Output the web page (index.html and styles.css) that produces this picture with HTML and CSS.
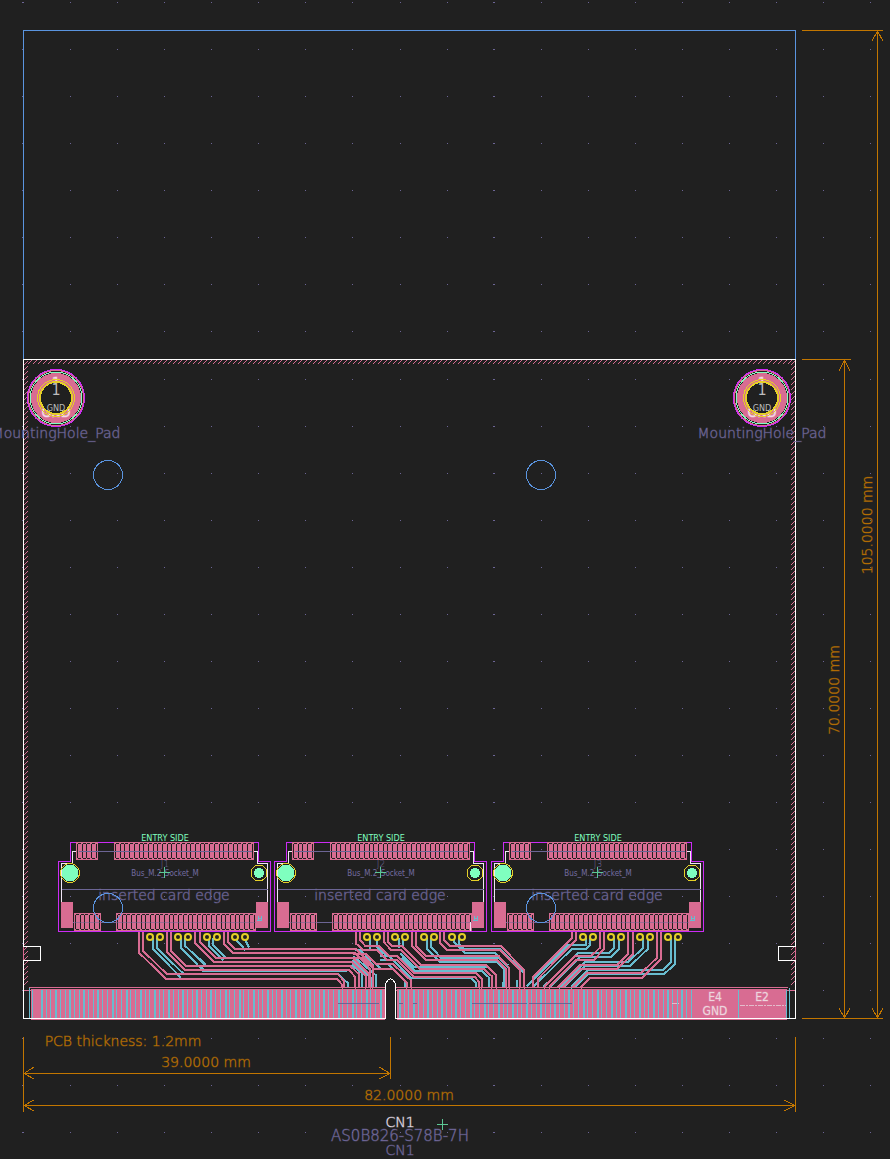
FILE: index.html
```html
<!DOCTYPE html>
<html lang="en">
<head>
<meta charset="utf-8">
<title>PCB layout</title>
<link rel="stylesheet" href="styles.css">
</head>
<body>
<main class="editor">
<svg class="board" viewBox="0 0 890 1159" aria-label="PCB layout">
  <defs>
    <g id="hole">
      <circle class="pad-line" r="27.500"/>
      <circle class="courtyard" r="28.500"/>
      <circle class="pad" r="25"/>
      <circle class="mint-line" r="26"/>
      <text class="label-large" y="-11">1</text>
      <text class="label-large" y="19">GND</text>
      <circle class="yellow-line" r="18.500"/>
      <circle class="drill" r="16"/>
      <text class="label-pin grey" y="-3">1</text>
      <text class="label-net grey" y="13">GND</text>
    </g>
    <g id="socket">
      <path class="courtyard" d="M70.500 842.500H258.500V861.500H270.500V931.500H58.500V861.500H70.500Z"/>
      <path class="silk" d="M61.500 902V863.500H72.500V851.500H79M252 851.500H257.500V863.500H267.500V902"/>
      <path class="fab" d="M61.500 889.500H267.500M61.500 902V922.500H267.500V902"/>
      <path class="pad" d="M61 902H73V928H61ZM256 902H268V928H256Z"/>
      <circle class="mint" cx="70" cy="873" r="8.500"/>
      <circle class="yellow-line" cx="70" cy="873" r="9.500"/>
      <circle class="mint" cx="259" cy="873" r="5"/>
      <circle class="yellow-line" cx="259" cy="873" r="8"/>
      <g class="socket-pads"></g>
      <path class="fab" d="M79 851.500H252"/>
      <path class="fab faint" d="M74 922.500H256"/>
      <path class="cyan" d="M257 920H262M258 916V920M261 916V920M258 918H261"/>
      <text class="text fab-text" x="164" y="900">inserted card edge</text>
      <text class="tiny fab-text" x="165" y="876">Bus_M.2_Socket_M</text>
      <path class="mint-line soft" d="M164.500 867V878M159 872.500H170"/>
      <text class="tiny entry" x="165" y="841">ENTRY SIDE</text>
    </g>
    <g id="vias">
      <circle cx="150" cy="937" r="3"/><circle cx="160" cy="937" r="3"/>
      <circle cx="178" cy="937" r="3"/><circle cx="188" cy="937" r="3"/>
      <circle cx="207" cy="937" r="3"/><circle cx="217" cy="937" r="3"/>
      <circle cx="235" cy="937" r="3"/><circle cx="245" cy="937" r="3"/>
    </g>
  </defs>

  <path id="grid" class="grid"/>
  <path id="hatch" class="hatch"/>

  <g class="traces back">
    <g transform="translate(10 925) scale(.3333)">
      <path d="M429 40V72L513 158M441 40V69L520 146M513 40V68L580 138H1010M525 40V62L588 122"/>
    </g>
    <g transform="translate(200 925) scale(.3333)">
      <path d="M28 40V65L70 106M40 40V60L76 96M0 100L16 118M0 122L14 138M105 40L137 76M133 40L147 68M415 147L443 174V190M455 120L487 146V190M457 105L515 160V190M460 93L527 150V190M465 75H480L545 132H580M468 88H485L520 120M510 40V72M530 40V65L560 93H595"/>
    </g>
    <g transform="translate(380 925) scale(.3333)">
      <path d="M57 40V70M68 40V62M0 92H25L78 145L92 160H275L287 174V190M0 105H38L98 163M60 85L100 125H320M65 98L105 138H305L328 158V190M0 118H25L75 168V190M140 40V70L180 110H350L373 132V190M152 40V65L183 98H355L387 130V190M223 40V52L255 84H345L385 122M238 40V58L252 72H360L433 145V190M370 170V190M411 165V190M458 170V190"/>
    </g>
    <g transform="translate(560 925) scale(.3333)">
      <path d="M78 40V60H25L-100 185M90 40V60L78 72H35L-80 186M162 40V68L147 84H55L-48 184V192M177 40V72L152 97H60L-30 186M250 40V68L205 110H75L0 185V192M263 40V72L212 122H75L12 186M333 40V112L310 134H85L35 184V192M345 40V117L313 147H85L45 188"/>
    </g>
  </g>
  <g class="traces front">
    <g transform="translate(10 925) scale(.3333)">
      <path d="M387 15V83L467 161H980L997 180V192M399 15V77L470 147H983L1003 168V192M471 15V80L525 135H1017L1035 155V192M483 15V77L528 122H1020L1047 148V192M555 15V55L612 111H1025L1068 154V192M570 15V50L617 99H1030L1077 148V192"/>
    </g>
    <g transform="translate(200 925) scale(.3333)">
      <path d="M73 15V58L98 84H465L500 118L510 132V192M84 15V50L104 72H468L520 124V192"/>
    </g>
    <g transform="translate(380 925) scale(.3333)">
      <path d="M193 15V45L210 62H362L432 135V192M181 15V55L200 74H360L420 135V192M108 15V62L138 92H355L387 128V192M97 15V65L136 104H350L378 132V192M24 15V50L36 62H65L122 119H318L347 150V192M12 15V52L33 74H63L122 133H312L337 155V192M-60 15V45L-45 62H-5L27 92H50L103 145H290L305 160V192M-73 15V55L-50 75H-10L20 104H50L103 157H285L297 170V192M-80 88H-40L-10 118H40L93 166V192M-80 100H-50L-20 131H38L82 174V192"/>
    </g>
    <g transform="translate(560 925) scale(.3333)">
      <path d="M36 15V40L-80 155V192M48 15V45L-65 160V192M120 15V68L95 92H45L-45 182V192M132 15V72L103 104H50L-30 184V192M204 15V88L172 119H60L-5 184V192M218 15V88L172 131H65L10 186V192M291 15V98L243 145H80L40 185V192M303 15V103L248 158H90L62 186V192"/>
    </g>
  </g>

  <g id="edge-pads">
    <path class="pad" d="M33 989H385V1020H31V989ZM397 989H787V1020H397Z"/>
    <path class="pad-line" d="M29 987.500H788M24 990.500H795"/>
    <path class="edge-gap" d="M33 988.500H384M397 988.500H690"/>
    <path class="edge-gap-wide" d="M695 988.500H786"/>
    <path id="edge-stripes" class="stripes"/>
    <path class="cyan" d="M29.500 988V1019M32.500 990V1019M738.500 990V1019M786.500 990V1019M789.500 988V1019"/>
    <path class="fab" d="M338 1003.500H379M399 1003.500H403M413 1003.500H417M472 1003.500H527M529 1003.500H572"/>
    <path class="light-dash" d="M740 1005.500H786M672 1003.500H679"/>
  </g>
  <text class="label-pad" x="715" y="1001">E4</text>
  <text class="label-pad" x="715" y="1015">GND</text>
  <text class="label-pad" x="762" y="1001">E2</text>

  <use href="#socket"/>
  <use href="#socket" x="216"/>
  <use href="#socket" x="433"/>
  <path class="silk" d="M470.500 922V931"/>
  <text class="designator fab-text" x="165" y="867">J1</text>
  <text class="designator fab-text" x="381" y="867">J2</text>
  <text class="designator fab-text" x="598" y="867">J3</text>
  <g class="vias">
    <use href="#vias"/>
    <use href="#vias" x="217"/>
    <use href="#vias" x="433"/>
  </g>

  <path class="slot" d="M386 1020V984Q386 979 390.500 979T395.500 984V1020Z"/>
  <path class="outline" d="M23.500 359.500H795.500V946.500H778.500V960.500H795.500V1018.500H395.500V984L393 980L390.500 978.500L388 980L385.500 984V1018.500H23.500V960.500H40.500V946.500H23.500Z"/>
  <path class="blue-line" d="M23.500 359V30.500H795.500V359"/>
  <path class="pad-line" d="M23.500 947V960M795.500 947V960"/>
  <g class="blue-line">
    <circle cx="108" cy="475" r="14.500"/><circle cx="541" cy="475" r="14.500"/>
    <circle cx="108" cy="908" r="14.500"/><circle cx="541" cy="908" r="14.500"/>
  </g>

  <use href="#hole" x="56" y="398"/>
  <use href="#hole" x="762" y="398"/>
  <text class="text fab-text" x="56" y="438">MountingHole_Pad</text>
  <text class="text fab-text" x="762" y="438">MountingHole_Pad</text>

  <path class="dimension" d="M802 30.500H883M877.500 30V1018M872 41L877.500 31L883 41M872 1008L877.500 1018L883 1008
    M802 359.500H851M844.500 360V1018M839 371L844.500 360L850 371M839 1008L844.500 1018L850 1008M802 1018.500H883
    M23.500 1037V1112M390.500 1037V1079M795.500 1037V1112
    M24 1073.500H390M34 1067L24 1073.500L34 1079M379 1067L390 1073.500L379 1079
    M24 1105.500H795M34 1100L24 1105.500L34 1111M784 1100L795 1105.500L784 1111"/>
  <g class="text dimension-text">
    <text transform="translate(872 525) rotate(-90)">105.0000 mm</text>
    <text transform="translate(839 690) rotate(-90)">70.0000 mm</text>
    <text x="206" y="1067">39.0000 mm</text>
    <text x="409" y="1100">82.0000 mm</text>
    <text x="123" y="1046">PCB thickness: 1.2mm</text>
  </g>
  <text class="text silk-text" x="400" y="1127">CN1</text>
  <text class="text part fab-text" x="400" y="1141">AS0B826-S78B-7H</text>
  <text class="text fab-text" x="400" y="1155">CN1</text>
  <path class="mint-line soft" d="M442.500 1119V1130M437 1124.500H448"/>
</svg>
</main>
<script src="board.js"></script>
</body>
</html>
```

FILE: styles.css
```css
:root {
  --ground: #202020;
  --copper: #d86c92;
  --back: #68bccf;
  --fab: #6c6595;
  --mint: #7fffbf;
  --yellow: #e5cf28;
  --blue: #5a94df;
  --orange: #c27600;
}
body { margin: 0; background: var(--ground); }
.editor { width: 100%; }
.board { display: block; width: 100%; height: auto; shape-rendering: crispEdges; fill: none; overflow: hidden; }
.grid { stroke: var(--fab); }
.hatch, .pad-line { stroke: var(--copper); fill: none; }
.pad { fill: var(--copper); }
.courtyard { stroke: #cc2bf5; }
.silk { stroke: #f0e6f5; }
.outline { stroke: #fff; }
.slot { fill: var(--ground); }
.fab { stroke: var(--fab); }
.faint { opacity: .5; }
.cyan { stroke: var(--back); }
.mint { fill: var(--mint); }
.mint-line { stroke: var(--mint); }
.soft { stroke: #5cc795; }
.yellow-line { stroke: var(--yellow); }
.blue-line { stroke: var(--blue); }
.drill { fill: var(--ground); stroke: var(--yellow); stroke-width: 2; }
.dimension { stroke: var(--orange); }
.traces { stroke-width: 6; }
.back { stroke: var(--back); }
.front { stroke: var(--copper); }
.stripes { fill: var(--back); }
.edge-gap { stroke: var(--ground); stroke-dasharray: 2 1 1 1; }
.edge-gap-wide { stroke: var(--ground); stroke-dasharray: 7 2; }
.light-dash { stroke: #e3bccb; stroke-dasharray: 5 1 2 1; }
.vias { fill: var(--ground); stroke: var(--yellow); stroke-width: 2; shape-rendering: geometricPrecision; }
.socket-gap { stroke: var(--ground); }
text { text-anchor: middle; }
.text { font: 200 14px "DejaVu Sans Light", "DejaVu Sans", sans-serif; stroke-opacity: .4; }
.part { font-size: 15px; }
.designator { font: 200 9px "DejaVu Sans Light", "DejaVu Sans", sans-serif; }
.tiny { font: 8px "DejaVu Sans Condensed", sans-serif; stroke: none; }
.fab-text { fill: #746ca0; }
.text.fab-text { stroke: #746ca0; }
.entry { font-size: 9px; fill: var(--mint); }
.silk-text { fill: #f0e6f5; stroke: #f0e6f5; }
.dimension-text { fill: var(--orange); stroke: var(--orange); }
.label-large { font: 14px "DejaVu Sans Condensed", sans-serif; fill: #f3dce5; stroke: #f3dce5; stroke-opacity: .5; }
.label-pin { font: 16px "DejaVu Sans Condensed", sans-serif; }
.label-net { font: 9px "DejaVu Sans Condensed", sans-serif; }
.label-pad { font: 12px "DejaVu Sans Condensed", sans-serif; fill: #eed6df; stroke: #eed6df; stroke-opacity: .3; }
.grey { fill: #bcbcbc; }
```

FILE: board.js
```js
const NS = "http://www.w3.org/2000/svg";
const PITCH = 4.707;
const GRID = 47.07;

// Grid dots
let dots = "";
for (let row = 0; row < 25; row++) {
  for (let col = 0; col < 19; col++) {
    const x = Math.round(23 + col * GRID);
    const y = Math.round(2 + row * GRID);
    dots += `M${col % 10 ? x : x - 1} ${y + 0.5}H${x + 1}`;
  }
}
document.getElementById("grid").setAttribute("d", dots);

// Copper zone hatching along three board edges
let hatch = "";
for (let y = 361; y < 986; y += 5) {
  hatch += `M24 ${y + 4}L28 ${y}M791 ${y + 4}L795 ${y}`;
}
for (let x = 28; x < 790; x += 5) {
  hatch += `M${x} 364L${x + 4} 360`;
}
document.getElementById("hatch").setAttribute("d", hatch);

// Socket pad rows: first pad's left edge, pad count, top edge
const rows = [[77, 4, 842], [115, 29, 842], [75, 5, 913], [117, 29, 913]];
function add(parent, cls, d) {
  const path = document.createElementNS(NS, "path");
  path.setAttribute("class", cls);
  path.setAttribute("d", d);
  parent.append(path);
}
const group = document.querySelector(".socket-pads");
for (const [left, count, top] of rows) {
  const right = Math.round(left + count * PITCH + 1);
  let gaps = "";
  let caps = "";
  for (let i = 0; i < count; i++) {
    const x = Math.round(left + i * PITCH);
    gaps += `M${x + 0.5} ${top + 2}V${top + 16}`;
    caps += `M${x + 1} ${top + 1.5}H${x + 4}M${x + 1} ${top + 16.5}H${x + 4}`;
  }
  add(group, "pad", `M${left - 1} ${top}H${right + 1}V${top + 18}H${left - 1}Z`);
  add(group, "socket-gap", gaps + caps + `M${right - 0.5} ${top + 2}V${top + 16}`);
}

// Back copper visible between the edge fingers
let stripes = "";
for (const [start, end] of [[41, 384], [399, 692]]) {
  let i = 0;
  for (let x = start; x < end; x += PITCH, i++) {
    const left = Math.round(x);
    stripes += `M${left} 990h${i % 3 ? 1 : 2}V1018H${left}Z`;
  }
}
document.getElementById("edge-stripes").setAttribute("d", stripes);
```
